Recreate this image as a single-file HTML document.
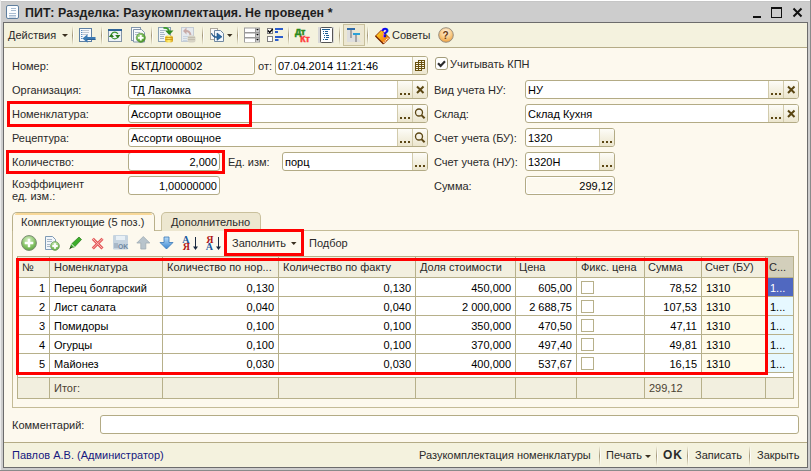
<!DOCTYPE html>
<html><head><meta charset="utf-8">
<style>
*{margin:0;padding:0;box-sizing:border-box}
html,body{width:811px;height:471px;overflow:hidden;background:#cdcdcd;font-family:"Liberation Sans",sans-serif;font-size:11px;color:#000}
.a{position:absolute}
.t{position:absolute;white-space:nowrap;line-height:13px;font-size:11px;color:#2a2a2a}
.in{position:absolute;background:#fff;border:1px solid #b3ab85;border-radius:3px;height:19px}
.ro{background:#fdf9ee;box-shadow:inset 0 0 0 1px #fff}
.bt{position:absolute;top:0;bottom:0;width:15px;border-left:1px solid #d2cbac;background:linear-gradient(#fdfcf7,#ece6ce)}
.bt.last{border-radius:0 2px 2px 0}
.dots{position:absolute;left:2px;bottom:3px;width:10px;height:2px;background:linear-gradient(90deg,#5c4714 0 2px,transparent 2px 4px,#5c4714 4px 6px,transparent 6px 8px,#5c4714 8px 10px)}
.rb{position:absolute;border:3px solid #ff0000}
.vs{position:absolute;width:2px;background:linear-gradient(#f4f2de,transparent 50%,#f4f2de),linear-gradient(90deg,#a4987a 0 1px,#fff 1px 2px)}
</style></head><body>
<!-- window frame -->
<div class="a" style="left:0;top:0;width:811px;height:1px;background:#fff"></div><div class="a" style="left:1px;top:1px;width:809px;height:1px;background:#c6c6c6"></div>
<div class="a" style="left:0;top:0;width:1px;height:471px;background:#ececec"></div>
<div class="a" style="left:810px;top:0;width:1px;height:471px;background:#8a8a8a"></div>
<div class="a" style="left:0;top:470px;width:811px;height:1px;background:#8a8a8a"></div>
<!-- title -->
<svg class="a" style="left:6px;top:5px" width="14" height="15" viewBox="0 0 14 15"><rect x="0.5" y="0.5" width="12" height="13" rx="1.5" fill="#fbfdff" stroke="#5f7f9f"/><path d="M5 3.5h5M5 5.5h5M3 8.5h7M3 10.5h7M3 12h7" stroke="#a9bdd2" stroke-width="1"/></svg>
<div class="t" style="left:25px;top:6px;font-weight:bold;font-size:12.4px;line-height:15px;color:#1e1e1e;letter-spacing:0.05px">ПИТ: Разделка: Разукомплектация. Не проведен *</div>
<div class="a" style="left:753px;top:16px;width:8px;height:2px;background:#111"></div>
<div class="a" style="left:771px;top:7px;width:11px;height:11px;border:1px solid #111;border-top-width:2px"></div>
<svg class="a" style="left:792px;top:7px" width="12" height="12" viewBox="0 0 12 12"><path d="M1.5 1.5l8 8M9.5 1.5l-8 8" stroke="#111" stroke-width="2"/></svg>

<!-- content frame -->
<div class="a" style="left:3px;top:22px;width:805px;height:446px;background:#fdf9ee;border:1px solid #6c6c6c"></div>
<!-- toolbar -->
<div class="a" style="left:4px;top:23px;width:803px;height:25px;background:#f4f2de;border-bottom:1px solid #b4ab86"></div>
<svg class="a" style="left:0;top:0" width="811" height="48" viewBox="0 0 811 48">
<defs>
<linearGradient id="gcoin" x1="0" y1="0" x2="1" y2="0"><stop offset="0" stop-color="#e8b820"/><stop offset=".5" stop-color="#fff27a"/><stop offset="1" stop-color="#d49a10"/></linearGradient>
<linearGradient id="gbook" x1="0" y1="0" x2="1" y2="1"><stop offset="0" stop-color="#ffe020"/><stop offset="1" stop-color="#f06010"/></linearGradient>
<radialGradient id="ghelp" cx=".5" cy=".3" r=".7"><stop offset="0" stop-color="#fff4e4"/><stop offset=".6" stop-color="#f8c880"/><stop offset="1" stop-color="#eea040"/></radialGradient>
<radialGradient id="ggreen" cx=".4" cy=".35" r=".7"><stop offset="0" stop-color="#b8e0a0"/><stop offset=".7" stop-color="#5aa838"/><stop offset="1" stop-color="#3d8a22"/></radialGradient>
</defs>
<!-- separators -->
<defs><linearGradient id="gsep" x1="0" y1="0" x2="0" y2="1"><stop offset="0" stop-color="#f4f2de"/><stop offset=".5" stop-color="#a4987a"/><stop offset="1" stop-color="#f4f2de"/></linearGradient>
<linearGradient id="gsepw" x1="0" y1="0" x2="0" y2="1"><stop offset="0" stop-color="#f4f2de"/><stop offset=".5" stop-color="#ffffff"/><stop offset="1" stop-color="#f4f2de"/></linearGradient></defs>
<rect x="72" y="26" width="1" height="19" fill="url(#gsep)"/><rect x="73" y="26" width="1" height="19" fill="url(#gsepw)"/>
<rect x="101" y="26" width="1" height="19" fill="url(#gsep)"/><rect x="102" y="26" width="1" height="19" fill="url(#gsepw)"/>
<rect x="151" y="26" width="1" height="19" fill="url(#gsep)"/><rect x="152" y="26" width="1" height="19" fill="url(#gsepw)"/>
<rect x="202" y="26" width="1" height="19" fill="url(#gsep)"/><rect x="203" y="26" width="1" height="19" fill="url(#gsepw)"/>
<rect x="237" y="26" width="1" height="19" fill="url(#gsep)"/><rect x="238" y="26" width="1" height="19" fill="url(#gsepw)"/>
<rect x="288" y="26" width="1" height="19" fill="url(#gsep)"/><rect x="289" y="26" width="1" height="19" fill="url(#gsepw)"/>
<rect x="339" y="26" width="1" height="19" fill="url(#gsep)"/><rect x="340" y="26" width="1" height="19" fill="url(#gsepw)"/>
<rect x="367" y="26" width="1" height="19" fill="url(#gsep)"/><rect x="368" y="26" width="1" height="19" fill="url(#gsepw)"/>
<!-- icon1: doc with arrow -->
<rect x="79.5" y="28.5" width="12" height="13" fill="#f6f9fc" stroke="#5d7fa3"/>
<path d="M81 30.5h1.5M81 32.5h1.5M81 34.5h1.5M81 36.5h1.5M81 38.5h1.5" stroke="#5a8cc0"/>
<path d="M83 30.5h6M83 32.5h6M83 34.5h5" stroke="#c0c8d2"/>
<path d="M86.5 37h9v3h-9z" fill="#3a7ab4"/><path d="M82.5 38.5l5-4.2v8.4z" fill="#3a7ab4"/>
<path d="M86.5 39.5h9" stroke="#2a5a8a" stroke-width=".8"/>
<!-- icon2: window refresh -->
<rect x="108.5" y="29.5" width="13" height="12" fill="#edf3f9" stroke="#8494a6"/>
<rect x="108" y="29" width="14" height="2" fill="#2f6498"/>
<path d="M111.5 34a3.8 3.8 0 0 1 6.5 0M118 37a3.8 3.8 0 0 1-6.5 0" fill="none" stroke="#3e9634" stroke-width="1.1"/>
<path d="M108.8 37h5.2l-2.6-3.6zM115.2 35h5.2l-2.6 3.6z" fill="#2a7a1e"/>
<!-- icon3: copy plus -->
<rect x="131.5" y="27.5" width="9" height="13" fill="#f8fafc" stroke="#8296ac"/>
<path d="M133.5 29.5h8l3 3v9.5h-11z" fill="#f8fafc" stroke="#8296ac"/>
<path d="M135 32.5h5M135 34.5h3" stroke="#b0bccc"/>
<circle cx="140.8" cy="37.8" r="4.6" fill="url(#ggreen)" stroke="#5a8a40" stroke-width=".6"/>
<path d="M140.8 35v5.6M138 37.8h5.6" stroke="#fff" stroke-width="1.8"/>
<!-- icon4: post -->
<rect x="158.5" y="27.5" width="12" height="14" fill="#f0f5fa" stroke="#8aa0b4"/>
<path d="M160 30.5h5M160 32.5h4M160 34.5h5M160 36.5h4M160 38.5h4" stroke="#a6b6c6"/>
<path d="M163.5 28c3 -.5 5 .5 5.5 3" fill="none" stroke="#3c9a2c" stroke-width="1.8"/>
<path d="M165 30.5h8.5l-4.25 4.5z" fill="#2e8a20"/>
<rect x="165" y="35.5" width="8" height="7" rx="2.5" fill="url(#gcoin)"/>
<path d="M165.5 37.5h7M165.5 39.5h7" stroke="#c89010" stroke-width=".8"/>
<!-- icon5: unpost disabled -->
<rect x="181.5" y="27.5" width="12" height="14" fill="#e6eaee" stroke="#c4ccd4"/>
<path d="M183 36.5h5M183 38.5h4M183 40.5h4" stroke="#c8d4e0"/>
<path d="M186.5 27.5l-3.5 3.5 3.5 3.5z" fill="#c8aaa6"/>
<path d="M186 31c2.5 0 4 1 4.5 4" fill="none" stroke="#c8aaa6" stroke-width="2"/>
<rect x="187.5" y="35.5" width="8" height="7" rx="2.5" fill="#d6d2c4"/>
<path d="M188 37.5h7M188 39.5h7" stroke="#bcb8a8" stroke-width=".8"/>
<!-- icon6: docs arrow -->
<rect x="210.5" y="28.5" width="7" height="11" fill="#fafafa" stroke="#aca89c"/>
<path d="M214.5 30.5h6l3 3v8h-9z" fill="#f2f7fc" stroke="#7088a0"/>
<path d="M211.5 33c1 2.5 3 3.5 5.5 3.8v-3.8l5 3.8-5 3.5v-2.5c-3.5-.3-5.5-2.3-5.5-4.8z" fill="#2a6aa4" stroke="#1a4a7a" stroke-width=".6"/>
<path d="M227 34h5.5l-2.75 3z" fill="#3a3020"/>
<!-- icon7: combos -->
<g>
<rect x="244" y="27.5" width="16" height="15" fill="#9a9a9a"/>
<rect x="245" y="28.5" width="10" height="3.5" fill="#fff"/><rect x="245" y="33.5" width="10" height="3.5" fill="#fff"/><rect x="245" y="38.5" width="10" height="3.5" fill="#fff"/>
<rect x="256" y="28.5" width="3" height="3.5" fill="#c8c8c8"/><rect x="256" y="33.5" width="3" height="3.5" fill="#c8c8c8"/><rect x="256" y="38.5" width="3" height="3.5" fill="#c8c8c8"/>
<path d="M256.2 29h2.6l-1.3 1.5zM256.2 34h2.6l-1.3 1.5zM256.2 39h2.6l-1.3 1.5z" fill="#000"/>
</g>
<!-- icon8: checkbox list -->
<rect x="267.5" y="28.5" width="5" height="5" fill="#fff" stroke="#808080"/>
<path d="M268 30.5l1.7 2 3-3.5" fill="none" stroke="#000" stroke-width="1.4"/>
<rect x="267.5" y="36.5" width="5" height="5" fill="#fff" stroke="#808080"/>
<path d="M275 28h8v2h-8zM275 31h3v2h-3zM275 36h8v2h-8zM275 39h3.5v2H275z" fill="#2a5ccc"/>
<!-- icon9: Dt Kt -->
<text x="295" y="34.6" font-family="Liberation Sans" font-weight="bold" font-size="8.6" fill="#2a8a1a" stroke="#2a8a1a" stroke-width=".6">Дт</text>
<text x="300.3" y="42" font-family="Liberation Sans" font-weight="bold" font-size="8.6" fill="#ff3838" stroke="#ff3838" stroke-width=".5">Кт</text>
<!-- icon10: doc list -->
<rect x="318" y="27" width="16" height="16" fill="#d8d8d8"/>
<rect x="320.5" y="27.5" width="12" height="15" rx="1" fill="#fff" stroke="#555"/>
<path d="M322 29.5h8" stroke="#1a5c90"/>
<path d="M323 31.5h1M325 31.5h3M323 33.5h1M325 33.5h3M324 35.5h1M326 35.5h3M324 37.5h1M326 37.5h3M323 39.5h1M325 39.5h3" stroke="#1a5c90"/>
<!-- pressed button -->
<rect x="343.5" y="24.5" width="21" height="21" fill="#ece7d2" stroke="#c8c09c"/>
<path d="M347 29h4.5l9.5 13h-14z" fill="#dedede"/>
<path d="M347 28h8v2h-8z" fill="#2f6aa8"/>
<path d="M353 33h7v2h-7z" fill="#2aa0d8"/>
<path d="M350 30h2v8h-2zM355 35h2v7h-2z" fill="#a4a4a4"/>
<!-- book -->
<path d="M375.5 36l6-6 8 8-6 6z" fill="url(#gbook)" stroke="#9a3a06" stroke-width="1"/>
<path d="M375.5 36l8 8" stroke="#7a2a04" stroke-width="1.2"/>
<path d="M383.6 42.6l5-5" stroke="#fff" stroke-width="1.2" stroke-dasharray="1 .9"/>
<text x="381.2" y="36.5" font-family="Liberation Sans" font-weight="bold" font-size="12" fill="#0000f0" stroke="#0000f0" stroke-width=".5">?</text>
<!-- help -->
<circle cx="446" cy="35" r="7.3" fill="url(#ghelp)" stroke="#9a9080" stroke-width="1"/>
<text x="442.6" y="39.2" font-family="Liberation Sans" font-weight="bold" font-size="10" fill="#6a3a12">?</text>
</svg>
<div class="t" style="left:392px;top:29px">Советы</div>

<div class="t" style="left:8px;top:29px">Действия</div>
<div class="a" style="left:62px;top:34px;width:0;height:0;border-left:3px solid transparent;border-right:3px solid transparent;border-top:3px solid #3a3020"></div>


<!-- form labels -->
<div class="t" style="left:12px;top:60px">Номер:</div>
<div class="t" style="left:12px;top:84px">Организация:</div>
<div class="t" style="left:12px;top:108px">Номенклатура:</div>
<div class="t" style="left:12px;top:132px">Рецептура:</div>
<div class="t" style="left:12px;top:156px">Количество:</div>
<div class="t" style="left:12px;top:178px;line-height:12px">Коэффициент<br>ед. изм.:</div>

<div class="in ro" style="left:128px;top:56px;width:127px"><div class="t" style="left:2px;top:3px;color:#000">БКТДЛ000002</div></div>
<div class="t" style="left:258px;top:60px">от:</div>
<div class="in" style="left:275px;top:56px;width:153px"><div class="t" style="left:2px;top:3px;color:#000">07.04.2014 11:21:46</div>
 <div class="bt last" style="left:136px"><svg class="a" style="left:2px;top:3px" width="11" height="12" viewBox="0 0 11 12"><path d="M0 2h3V0h7v9H7v2H0z" fill="#6a5210"/><path d="M4 1.5h2M7 1.5h2M1 3.5h2M4 3.5h2M7 3.5h2M1 5.5h2M4 5.5h2M7 5.5h2M1 7.5h2M4 7.5h2M7 7.5h2M1 9.5h2M4 9.5h2" stroke="#fbf7e6" stroke-width="1"/></svg></div></div>
<div class="in" style="left:128px;top:80px;width:300px"><div class="t" style="left:2px;top:3px;color:#000">ТД Лакомка</div>
 <div class="bt" style="left:268px"><div class="dots"></div></div>
 <div class="bt last" style="left:283px"><svg class="a" style="left:3px;top:4px" width="9" height="9" viewBox="0 0 9 9"><path d="M1 1.5l6.5 6.5M7.5 1.5l-6.5 6.5" stroke="#5a4612" stroke-width="2"/></svg></div></div>
<div class="in" style="left:128px;top:104px;width:300px"><div class="t" style="left:2px;top:3px;color:#000">Ассорти овощное</div>
 <div class="bt" style="left:268px"><div class="dots"></div></div>
 <div class="bt last" style="left:283px"><svg class="a" style="left:1px;top:1.5px" width="12" height="13" viewBox="0 0 12 13"><circle cx="5" cy="5.5" r="3.5" fill="none" stroke="#5c4714" stroke-width="1.3"/><path d="M7.4 8.1l3.2 3.2" stroke="#5c4714" stroke-width="2"/></svg></div></div>
<div class="in" style="left:128px;top:128px;width:300px"><div class="t" style="left:2px;top:3px;color:#000">Ассорти овощное</div>
 <div class="bt" style="left:268px"><div class="dots"></div></div>
 <div class="bt last" style="left:283px"><svg class="a" style="left:1px;top:1.5px" width="12" height="13" viewBox="0 0 12 13"><circle cx="5" cy="5.5" r="3.5" fill="none" stroke="#5c4714" stroke-width="1.3"/><path d="M7.4 8.1l3.2 3.2" stroke="#5c4714" stroke-width="2"/></svg></div></div>
<div class="in" style="left:128px;top:152px;width:92px"><div class="t" style="right:2px;top:3px;color:#000">2,000</div></div>
<div class="t" style="left:228px;top:156px">Ед. изм:</div>
<div class="in" style="left:282px;top:152px;width:146px"><div class="t" style="left:2px;top:3px;color:#000">порц</div>
 <div class="bt last" style="left:129px"><div class="dots"></div></div></div>
<div class="in" style="left:128px;top:176px;width:92px"><div class="t" style="right:2px;top:3px;color:#000">1,00000000</div></div>

<!-- right column -->
<div class="a" style="left:435px;top:57px;width:13px;height:13px;border:1px solid #a39c7a;border-radius:3px;background:#fff"><svg class="a" style="left:0;top:0" width="11" height="11" viewBox="0 0 11 11"><path d="M2 5.3l2.6 2.6 4.4-4.6" fill="none" stroke="#2c2c2c" stroke-width="2.2"/></svg></div>
<div class="t" style="left:450px;top:58px">Учитывать КПН</div>
<div class="t" style="left:434px;top:84px">Вид учета НУ:</div>
<div class="t" style="left:434px;top:108px">Склад:</div>
<div class="t" style="left:434px;top:132px">Счет учета (БУ):</div>
<div class="t" style="left:434px;top:156px">Счет учета (НУ):</div>
<div class="t" style="left:434px;top:180px">Сумма:</div>
<div class="in" style="left:525px;top:80px;width:274px"><div class="t" style="left:2px;top:3px;color:#000">НУ</div>
 <div class="bt" style="left:242px"><div class="dots"></div></div>
 <div class="bt last" style="left:257px"><svg class="a" style="left:3px;top:4px" width="9" height="9" viewBox="0 0 9 9"><path d="M1 1.5l6.5 6.5M7.5 1.5l-6.5 6.5" stroke="#5a4612" stroke-width="2"/></svg></div></div>
<div class="in" style="left:525px;top:104px;width:274px"><div class="t" style="left:2px;top:3px;color:#000">Склад Кухня</div>
 <div class="bt" style="left:242px"><div class="dots"></div></div>
 <div class="bt last" style="left:257px"><svg class="a" style="left:3px;top:4px" width="9" height="9" viewBox="0 0 9 9"><path d="M1 1.5l6.5 6.5M7.5 1.5l-6.5 6.5" stroke="#5a4612" stroke-width="2"/></svg></div></div>
<div class="in" style="left:525px;top:128px;width:90px"><div class="t" style="left:2px;top:3px;color:#000">1320</div>
 <div class="bt last" style="left:73px"><div class="dots"></div></div></div>
<div class="in" style="left:525px;top:152px;width:90px"><div class="t" style="left:2px;top:3px;color:#000">1320Н</div>
 <div class="bt last" style="left:73px"><div class="dots"></div></div></div>
<div class="in ro" style="left:525px;top:176px;width:90px"><div class="t" style="right:1px;top:3px;color:#000">299,12</div></div>

<!-- red boxes -->
<div class="rb" style="left:7px;top:101px;width:245px;height:26px"></div>
<div class="rb" style="left:6px;top:150px;width:219px;height:24px"></div>

<div class="a" style="left:12px;top:230px;width:787px;height:178px;border:1px solid #c4bb97;border-top:none"></div>
<div class="a" style="left:154px;top:230px;width:645px;height:1px;background:#c4bb97"></div>
<div class="a" style="left:161px;top:212px;width:100px;height:19px;background:#ede7d0;border:1px solid #c9c09c;border-bottom:none;border-radius:5px 5px 0 0"></div>
<div class="t" style="left:171px;top:216px">Дополнительно</div>
<div class="a" style="left:12px;top:212px;width:143px;height:19px;background:#fdf9ee;border:1px solid #b9b08a;border-bottom:none;border-radius:5px 5px 0 0"></div>
<div class="a" style="left:15px;top:213px;width:137px;height:2px;background:#f8d898;border-radius:2px 2px 0 0"></div>
<div class="t" style="left:21px;top:216px">Комплектующие (5 поз.)</div>
<svg class="a" style="left:0;top:230px" width="811" height="26" viewBox="0 230 811 26">
<defs>
<radialGradient id="gg2" cx=".45" cy=".3" r=".75"><stop offset="0" stop-color="#d8f0c8"/><stop offset=".6" stop-color="#88c468"/><stop offset="1" stop-color="#58a03a"/></radialGradient>
<linearGradient id="gblue" x1="0" y1="0" x2="0" y2="1"><stop offset="0" stop-color="#b8dcf8"/><stop offset="1" stop-color="#3a86d0"/></linearGradient>
</defs>
<circle cx="29" cy="243" r="7.4" fill="url(#gg2)" stroke="#7c8c74" stroke-width="1"/>
<path d="M29 238.7v8.6M24.7 243h8.6" stroke="#fff" stroke-width="2.4"/>
<path d="M45.5 236.5h7l3 3v10h-10z" fill="#f2f6fa" stroke="#7f9ab4"/>
<path d="M47 239.5h5M47 241.5h5M47 244.5h3M47 246.5h3" stroke="#a8b8c8"/>
<circle cx="55" cy="246" r="4.4" fill="url(#gg2)" stroke="#6a9a5a" stroke-width=".7"/>
<path d="M55 243.3v5.4M52.3 246h5.4" stroke="#fff" stroke-width="1.8"/>
<path d="M70.5 247.5l1-3.5 7.5-7 2.5 2.5-7 7.5z" fill="#3cae2a" stroke="#2a7a1c" stroke-width=".7"/>
<path d="M71.5 244l3 3" stroke="#fff" stroke-width="1"/><path d="M69 249.5l1.7-3 1.3 1.3z" fill="#1a3a10"/>
<path d="M92.8 238.8l9.7 9.7M102.5 238.8l-9.7 9.7" stroke="#e45858" stroke-width="3"/>
<path d="M92.8 238.8l9.7 9.7M102.5 238.8l-9.7 9.7" stroke="#f8b4b4" stroke-width="1"/>
<rect x="113" y="235" width="15" height="14.5" rx="1" fill="#c6d4e0"/>
<rect x="116" y="236" width="9" height="4" fill="#e8f0f6"/>
<rect x="114" y="243" width="4" height="5" fill="#a8b8c8"/><text x="118" y="249.3" font-family="Liberation Sans" font-weight="bold" font-size="6.8" fill="#7088a0">OK</text>
<path d="M143.3 236.5l6.5 6.5h-4v6h-5v-6h-4z" fill="#b8c4cc" stroke="#a0acb4" stroke-width=".8"/>
<path d="M166.5 249l6.5-6.5h-4v-5.5h-5v5.5h-4z" fill="url(#gblue)" stroke="#3a78b8" stroke-width=".8"/>
<text x="182.3" y="242.6" font-family="Liberation Serif" font-weight="bold" font-size="10" fill="#1a5aa0">A</text>
<text x="182.8" y="250.3" font-family="Liberation Serif" font-weight="bold" font-size="10" fill="#b01818">Я</text>
<path d="M195.5 237v11" stroke="#1a2a40" stroke-width="1"/><path d="M193 246.5h5l-2.5 3.5z" fill="#1a2a40"/>
<text x="206.3" y="242.6" font-family="Liberation Serif" font-weight="bold" font-size="10" fill="#b01818">Я</text>
<text x="205.8" y="250.3" font-family="Liberation Serif" font-weight="bold" font-size="10" fill="#1a5aa0">A</text>
<path d="M218.5 237v11" stroke="#1a2a40" stroke-width="1"/><path d="M216 246.5h5l-2.5 3.5z" fill="#1a2a40"/>
<path d="M291 242h5.5l-2.75 3z" fill="#3a3020"/>
</svg>
<div class="t" style="left:232px;top:237px">Заполнить</div>
<div class="t" style="left:309px;top:237px">Подбор</div>
<div class="a" style="left:17px;top:256px;width:777px;height:143px;background:#fff;border:1px solid #b7b08a"></div>
<div class="a" style="left:18px;top:257px;width:775px;height:20px;background:#f2efdf"></div>
<div class="a" style="left:765px;top:257px;width:28px;height:20px;background:#d3cfbb"></div>
<div class="a" style="left:701px;top:278px;width:64px;height:95px;background:#fffbea"></div>
<div class="a" style="left:765px;top:278px;width:28px;height:95px;background:#e6f8ff"></div>
<div class="a" style="left:766px;top:278px;width:27px;height:18px;background:#5068c0"></div>
<div class="a" style="left:18px;top:377px;width:775px;height:21px;background:#f2efdf;border-top:1px solid #b7b08a"></div>
<div class="a" style="left:49px;top:257px;width:1px;height:116px;background:#b7b08a"></div>
<div class="a" style="left:49px;top:378px;width:1px;height:20px;background:#b7b08a"></div>
<div class="a" style="left:162px;top:257px;width:1px;height:116px;background:#b7b08a"></div>
<div class="a" style="left:162px;top:378px;width:1px;height:20px;background:#b7b08a"></div>
<div class="a" style="left:278px;top:257px;width:1px;height:116px;background:#b7b08a"></div>
<div class="a" style="left:278px;top:378px;width:1px;height:20px;background:#b7b08a"></div>
<div class="a" style="left:415px;top:257px;width:1px;height:116px;background:#b7b08a"></div>
<div class="a" style="left:415px;top:378px;width:1px;height:20px;background:#b7b08a"></div>
<div class="a" style="left:515px;top:257px;width:1px;height:116px;background:#b7b08a"></div>
<div class="a" style="left:515px;top:378px;width:1px;height:20px;background:#b7b08a"></div>
<div class="a" style="left:576px;top:257px;width:1px;height:116px;background:#b7b08a"></div>
<div class="a" style="left:576px;top:378px;width:1px;height:20px;background:#b7b08a"></div>
<div class="a" style="left:644px;top:257px;width:1px;height:116px;background:#b7b08a"></div>
<div class="a" style="left:644px;top:378px;width:1px;height:20px;background:#b7b08a"></div>
<div class="a" style="left:701px;top:257px;width:1px;height:116px;background:#b7b08a"></div>
<div class="a" style="left:701px;top:378px;width:1px;height:20px;background:#b7b08a"></div>
<div class="a" style="left:765px;top:257px;width:1px;height:116px;background:#b7b08a"></div>
<div class="a" style="left:765px;top:378px;width:1px;height:20px;background:#b7b08a"></div>
<div class="a" style="left:18px;top:277px;width:775px;height:1px;background:#b7b08a"></div>
<div class="a" style="left:18px;top:296px;width:775px;height:1px;background:#b7b08a"></div>
<div class="a" style="left:18px;top:315px;width:775px;height:1px;background:#b7b08a"></div>
<div class="a" style="left:18px;top:334px;width:775px;height:1px;background:#b7b08a"></div>
<div class="a" style="left:18px;top:353px;width:775px;height:1px;background:#b7b08a"></div>
<div class="a" style="left:18px;top:372px;width:775px;height:1px;background:#b7b08a"></div>
<div class="t" style="left:22px;top:261px">№</div>
<div class="t" style="left:54px;top:261px">Номенклатура</div>
<div class="t" style="left:167px;top:261px">Количество по нор...</div>
<div class="t" style="left:283px;top:261px">Количество по факту</div>
<div class="t" style="left:420px;top:261px">Доля стоимости</div>
<div class="t" style="left:519px;top:261px">Цена</div>
<div class="t" style="left:581px;top:261px">Фикс. цена</div>
<div class="t" style="left:648px;top:261px">Сумма</div>
<div class="t" style="left:705px;top:261px">Счет (БУ)</div>
<div class="t" style="left:769px;top:261px">С...</div>
<div class="t" style="left:0;width:45px;text-align:right;top:282px;color:#000">1</div>
<div class="t" style="left:54px;top:282px;color:#000">Перец болгарский</div>
<div class="t" style="left:0;width:274px;text-align:right;top:282px;color:#000">0,130</div>
<div class="t" style="left:0;width:411px;text-align:right;top:282px;color:#000">0,130</div>
<div class="t" style="left:0;width:511px;text-align:right;top:282px;color:#000">450,000</div>
<div class="t" style="left:0;width:572px;text-align:right;top:282px;color:#000">605,00</div>
<div class="a" style="left:581px;top:281px;width:13px;height:13px;background:#fff;border:1px solid #b7b08a"></div>
<div class="t" style="left:0;width:697px;text-align:right;top:282px;color:#000">78,52</div>
<div class="t" style="left:706px;top:282px;color:#000">1310</div>
<div class="t" style="left:770px;top:282px;color:#fff">1...</div>
<div class="t" style="left:0;width:45px;text-align:right;top:301px;color:#000">2</div>
<div class="t" style="left:54px;top:301px;color:#000">Лист салата</div>
<div class="t" style="left:0;width:274px;text-align:right;top:301px;color:#000">0,040</div>
<div class="t" style="left:0;width:411px;text-align:right;top:301px;color:#000">0,040</div>
<div class="t" style="left:0;width:511px;text-align:right;top:301px;color:#000">2 000,000</div>
<div class="t" style="left:0;width:572px;text-align:right;top:301px;color:#000">2 688,75</div>
<div class="a" style="left:581px;top:300px;width:13px;height:13px;background:#fff;border:1px solid #b7b08a"></div>
<div class="t" style="left:0;width:697px;text-align:right;top:301px;color:#000">107,53</div>
<div class="t" style="left:706px;top:301px;color:#000">1310</div>
<div class="t" style="left:770px;top:301px;color:#000">1...</div>
<div class="t" style="left:0;width:45px;text-align:right;top:320px;color:#000">3</div>
<div class="t" style="left:54px;top:320px;color:#000">Помидоры</div>
<div class="t" style="left:0;width:274px;text-align:right;top:320px;color:#000">0,100</div>
<div class="t" style="left:0;width:411px;text-align:right;top:320px;color:#000">0,100</div>
<div class="t" style="left:0;width:511px;text-align:right;top:320px;color:#000">350,000</div>
<div class="t" style="left:0;width:572px;text-align:right;top:320px;color:#000">470,50</div>
<div class="a" style="left:581px;top:319px;width:13px;height:13px;background:#fff;border:1px solid #b7b08a"></div>
<div class="t" style="left:0;width:697px;text-align:right;top:320px;color:#000">47,11</div>
<div class="t" style="left:706px;top:320px;color:#000">1310</div>
<div class="t" style="left:770px;top:320px;color:#000">1...</div>
<div class="t" style="left:0;width:45px;text-align:right;top:339px;color:#000">4</div>
<div class="t" style="left:54px;top:339px;color:#000">Огурцы</div>
<div class="t" style="left:0;width:274px;text-align:right;top:339px;color:#000">0,100</div>
<div class="t" style="left:0;width:411px;text-align:right;top:339px;color:#000">0,100</div>
<div class="t" style="left:0;width:511px;text-align:right;top:339px;color:#000">370,000</div>
<div class="t" style="left:0;width:572px;text-align:right;top:339px;color:#000">497,40</div>
<div class="a" style="left:581px;top:338px;width:13px;height:13px;background:#fff;border:1px solid #b7b08a"></div>
<div class="t" style="left:0;width:697px;text-align:right;top:339px;color:#000">49,81</div>
<div class="t" style="left:706px;top:339px;color:#000">1310</div>
<div class="t" style="left:770px;top:339px;color:#000">1...</div>
<div class="t" style="left:0;width:45px;text-align:right;top:358px;color:#000">5</div>
<div class="t" style="left:54px;top:358px;color:#000">Майонез</div>
<div class="t" style="left:0;width:274px;text-align:right;top:358px;color:#000">0,030</div>
<div class="t" style="left:0;width:411px;text-align:right;top:358px;color:#000">0,030</div>
<div class="t" style="left:0;width:511px;text-align:right;top:358px;color:#000">400,000</div>
<div class="t" style="left:0;width:572px;text-align:right;top:358px;color:#000">537,67</div>
<div class="a" style="left:581px;top:357px;width:13px;height:13px;background:#fff;border:1px solid #b7b08a"></div>
<div class="t" style="left:0;width:697px;text-align:right;top:358px;color:#000">16,15</div>
<div class="t" style="left:706px;top:358px;color:#000">1310</div>
<div class="t" style="left:770px;top:358px;color:#000">1...</div>
<div class="t" style="left:54px;top:382px;color:#4a4232">Итог:</div>
<div class="t" style="left:649px;top:382px;color:#4a4232">299,12</div>
<div class="rb" style="left:224px;top:229px;width:80px;height:27px"></div>
<div class="rb" style="left:16px;top:258px;width:752px;height:117px"></div>
<div class="t" style="left:12px;top:419px">Комментарий:</div>
<div class="in" style="left:100px;top:415px;width:699px;height:19px"></div>
<!-- status bar -->
<div class="a" style="left:4px;top:442px;width:803px;height:25px;background:#f4f2de;border-top:1px solid #b4ab86"></div>
<div class="t" style="left:12px;top:449px;color:#16187e">Павлов А.В. (Администратор)</div>
<div class="t" style="left:419px;top:449px">Разукомплектация номенклатуры</div>
<div class="vs" style="left:599px;top:446px;height:20px"></div>
<div class="t" style="left:606px;top:449px">Печать</div>
<div class="a" style="left:645px;top:455px;width:0;height:0;border-left:3px solid transparent;border-right:3px solid transparent;border-top:3px solid #3a3020"></div>
<div class="vs" style="left:656px;top:446px;height:20px"></div>
<div class="t" style="left:663px;top:449px;font-weight:bold;font-size:12px;letter-spacing:0.8px">OK</div>
<div class="vs" style="left:687px;top:446px;height:20px"></div>
<div class="t" style="left:695px;top:449px">Записать</div>
<div class="vs" style="left:749px;top:446px;height:20px"></div>
<div class="t" style="left:757px;top:449px">Закрыть</div>

</body></html>
